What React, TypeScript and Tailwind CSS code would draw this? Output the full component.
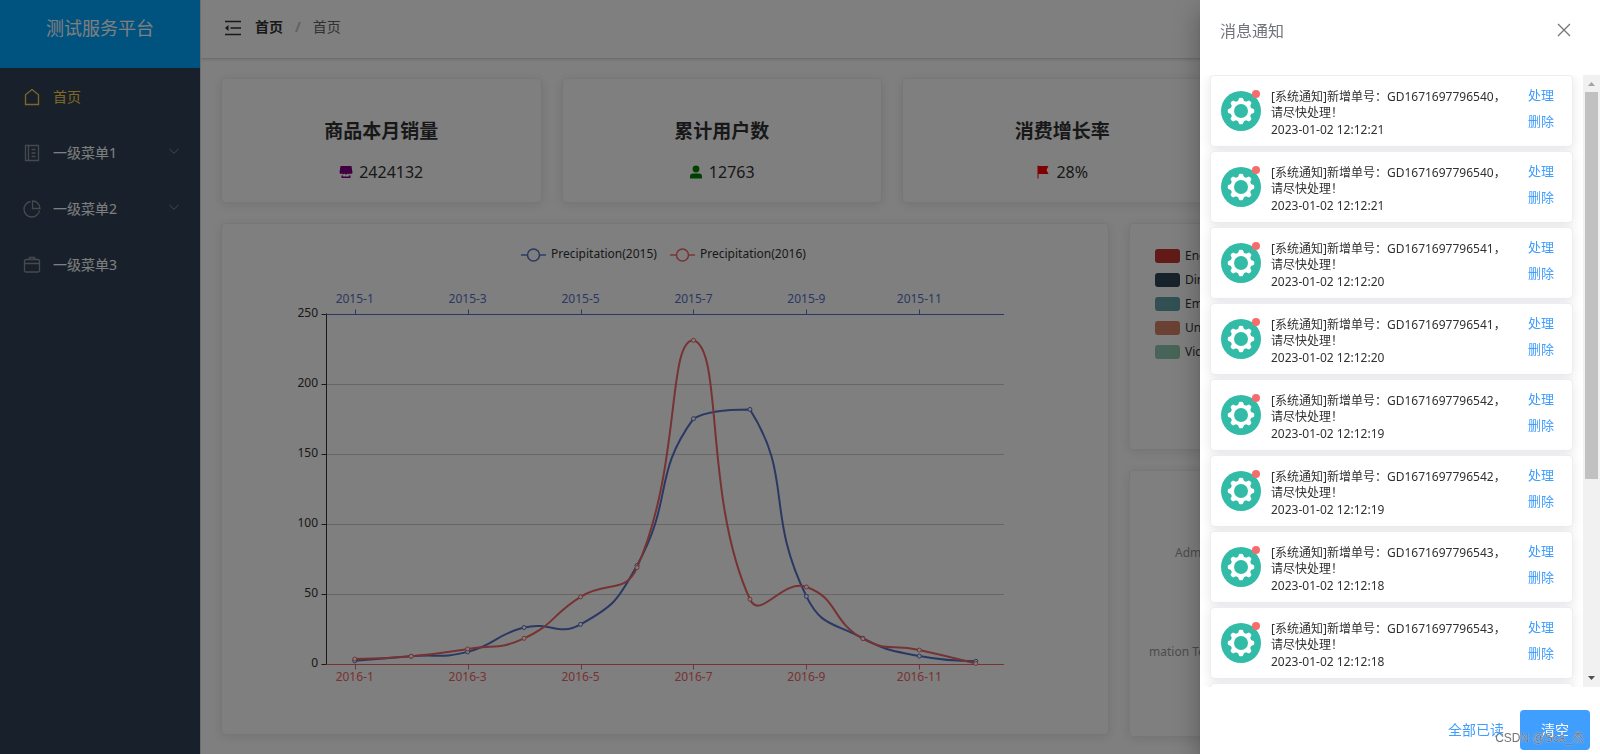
import React from 'react';

const PRECIPITATION_2015 = [2.6, 5.9, 9.0, 26.4, 28.7, 70.7, 175.6, 182.2, 48.7, 18.8, 6.0, 2.3];
const PRECIPITATION_2016 = [3.9, 5.9, 11.1, 18.7, 48.3, 69.2, 231.6, 46.6, 55.4, 18.4, 10.3, 0.7];

const PLOT = { left: 104.5, right: 782, top: 90.5, bottom: 440.5, max: 250 };
const BAND = (PLOT.right - PLOT.left) / 12;

type Point = [number, number];

function toPoints(values: number[]): Point[] {
  return values.map((v, i) => [
    PLOT.left + BAND * (i + 0.5),
    PLOT.bottom - (v / PLOT.max) * (PLOT.bottom - PLOT.top),
  ]);
}

// Bezier smoothing with control points clamped to the bounding box of the series.
function smoothPath(points: Point[], smooth = 0.5): string {
  const xs = points.map((p) => p[0]);
  const ys = points.map((p) => p[1]);
  const clamp = ([x, y]: Point): Point => [
    Math.max(Math.min(x, Math.max(...xs)), Math.min(...xs)),
    Math.max(Math.min(y, Math.max(...ys)), Math.min(...ys)),
  ];
  let d = `M${points[0][0]} ${points[0][1]}`;
  let cp0: Point = points[0];
  for (let i = 1; i < points.length; i++) {
    const p = points[i];
    const prev = points[i - 1];
    const next = points[i + 1];
    let cp1: Point = p;
    let nextCp: Point = p;
    if (next) {
      const v: Point = [next[0] - prev[0], next[1] - prev[1]];
      const lenPrev = Math.hypot(p[0] - prev[0], p[1] - prev[1]);
      const lenNext = Math.hypot(p[0] - next[0], p[1] - next[1]);
      const ratio = lenNext / (lenNext + lenPrev);
      cp1 = [p[0] - v[0] * smooth * (1 - ratio), p[1] - v[1] * smooth * (1 - ratio)];
      nextCp = [p[0] + v[0] * smooth * ratio, p[1] + v[1] * smooth * ratio];
    }
    const a = clamp(cp0);
    const b = clamp(cp1);
    d += `C${a[0]} ${a[1]} ${b[0]} ${b[1]} ${p[0]} ${p[1]}`;
    cp0 = nextCp;
  }
  return d;
}

function Series({ values, color }: { values: number[]; color: string }) {
  const points = toPoints(values);
  return (
    <g stroke={color}>
      <path d={smoothPath(points)} fill="none" strokeWidth="2" />
      {points.map(([x, y], i) => (
        <circle key={i} cx={x} cy={y} r="2" fill="#fff" strokeWidth="1" />
      ))}
    </g>
  );
}

function LegendMark({ x, color, label }: { x: number; color: string; label: string }) {
  return (
    <g>
      <path d={`M${x} 31h25`} stroke={color} strokeWidth="2" opacity="0.7" />
      <circle cx={x + 12.5} cy="31" r="6" fill="#fff" stroke={color} strokeWidth="1.5" />
      <text x={x + 30} y="34" fill="#333">
        {label}
      </text>
    </g>
  );
}

function PrecipitationChart() {
  const months = [1, 3, 5, 7, 9, 11];
  const ticks = [0, 50, 100, 150, 200, 250];
  const tickY = (t: number) => PLOT.bottom - Math.round((t / 250) * 350);
  return (
    <svg viewBox="0 0 886 510" className="block h-auto w-full text-[12px]" role="img" aria-label="Precipitation">
      <LegendMark x={299} color="#5470c6" label="Precipitation(2015)" />
      <LegendMark x={448} color="#ee6666" label="Precipitation(2016)" />
      {ticks.map((t) => (
        <g key={t}>
          {t > 0 && t < 250 && <path d={`M${PLOT.left} ${tickY(t)}H${PLOT.right}`} stroke="#ccc" />}
          <path d={`M${PLOT.left - 5} ${tickY(t)}h5`} stroke="#333" />
          <text x="96" y={tickY(t) + 2.5} textAnchor="end" fill="#333">
            {t}
          </text>
        </g>
      ))}
      <path d={`M${PLOT.left} ${PLOT.top - 1}V${PLOT.bottom}`} stroke="#333" />
      <path d={`M${PLOT.left} ${PLOT.top}H${PLOT.right}`} stroke="#5470c6" />
      <path d={`M${PLOT.left} ${PLOT.bottom}H${PLOT.right}`} stroke="#ee6666" />
      {months.map((m) => {
        const x = PLOT.left + BAND * (m - 0.5);
        const tx = Math.round(x) + 0.5;
        return (
          <g key={m} textAnchor="middle">
            <path d={`M${tx} ${PLOT.top}v-5`} stroke="#5470c6" />
            <path d={`M${tx} ${PLOT.bottom}v5`} stroke="#ee6666" />
            <text x={x} y="79" fill="#5470c6">{`2015-${m}`}</text>
            <text x={x} y="457" fill="#ee6666">{`2016-${m}`}</text>
          </g>
        );
      })}
      <Series values={PRECIPITATION_2015} color="#5470c6" />
      <Series values={PRECIPITATION_2016} color="#ee6666" />
    </svg>
  );
}

const menuIcons = {
  home: <path d="M2.5 16.5V6.8L9 1.5l6.5 5.3v9.7z" />,
  notebook: (
    <>
      <path d="M2.5 1.5h13v15h-13zM5.5 1.5v15" />
      <path d="M8.5 5.5h4M8.5 9h4M8.5 12.5h4" />
    </>
  ),
  pie: (
    <>
      <path d="M7.5 1.5a7.8 7.8 0 1 0 9 9" />
      <path d="M9.5 1v7.5H17A7.5 7.5 0 0 0 9.5 1z" />
    </>
  ),
  suitcase: (
    <>
      <rect x="1.5" y="3.5" width="15" height="12.5" rx="1.5" />
      <path d="M6 3.5l.5-2h5l.5 2M1.5 7.5h15" />
    </>
  ),
};

const menu: { icon: keyof typeof menuIcons; label: string; active?: boolean; expandable?: boolean }[] = [
  { icon: 'home', label: '首页', active: true },
  { icon: 'notebook', label: '一级菜单1', expandable: true },
  { icon: 'pie', label: '一级菜单2', expandable: true },
  { icon: 'suitcase', label: '一级菜单3' },
];

function Sidebar() {
  return (
    <aside className="w-[200px] shrink-0 bg-[#304156]">
      <h1 className="flex h-[68px] items-start justify-center bg-[#00a4ff] pt-4 text-lg leading-6 font-normal text-white">
        测试服务平台
      </h1>
      <nav>
        <ul className="pt-px">
          {menu.map((item) => (
            <li key={item.label}>
              <a href="#" className="flex h-14 items-center pr-5 pl-[23px] text-sm">
                <svg
                  viewBox="0 0 18 18"
                  className={item.active ? 'size-[18px] text-[#ffd04b]' : 'size-[18px] text-[#909399]'}
                  fill="none"
                  stroke="currentColor"
                  strokeWidth="1.3"
                  aria-hidden="true"
                >
                  {menuIcons[item.icon]}
                </svg>
                <span className={item.active ? 'ml-3 text-[#ffd04b]' : 'ml-3 text-white'}>{item.label}</span>
                {item.expandable && (
                  <svg viewBox="0 0 12 12" className="mb-1 ml-auto size-3 text-[#909399]" fill="none" stroke="currentColor" aria-hidden="true">
                    <path d="M1.5 4L6 8.3L10.5 4" />
                  </svg>
                )}
              </a>
            </li>
          ))}
        </ul>
      </nav>
    </aside>
  );
}

function TopBar() {
  return (
    <header className="flex h-[59px] items-start border-b border-[#d8dce5] pt-[17px] pl-[23px] shadow-[0_1px_3px_0_rgba(0,0,0,.12)]">
      <button type="button" aria-label="收起菜单" className="mt-0.5">
        <svg viewBox="0 0 18 18" className="size-[18px]" aria-hidden="true">
          <path d="M1 2.5h16M6.5 9H17M1 15.5h16" stroke="#303133" strokeWidth="1.5" fill="none" />
          <path d="M4.5 6v6L1 9z" fill="#303133" />
        </svg>
      </button>
      <nav className="ml-[13px] flex text-sm leading-5">
        <a href="#" className="font-bold text-[#303133]">
          首页
        </a>
        <span className="mx-3 font-bold text-[#c0c4cc]">/</span>
        <span className="text-[#606266]">首页</span>
      </nav>
    </header>
  );
}

const CARD = 'rounded border border-[#ebeef5] bg-white shadow-[0_2px_12px_0_rgba(0,0,0,.1)]';

const statIcons = {
  goods: (
    <>
      <path d="M1.5 1h11l1 6.5a1.5 1.5 0 0 1-2.5 1 1.5 1.5 0 0 1-2.6 0 1.5 1.5 0 0 1-2.8 0 1.5 1.5 0 0 1-2.6 0A1.5 1.5 0 0 1 .5 7.5z" />
      <path d="M2.5 10.5H4v1h6v-1h1.5V13h-9z" />
    </>
  ),
  user: (
    <>
      <circle cx="7" cy="4" r="3.4" />
      <path d="M1 13.5v-2a3 3 0 0 1 3-3h6a3 3 0 0 1 3 3v2z" />
    </>
  ),
  flag: <path d="M1.5 .5h1V1h10l-2 4 2 4h-10v4.5h-1z" />,
};

const stats: { icon: keyof typeof statIcons; title: string; value: string; color: string }[] = [
  { icon: 'goods', title: '商品本月销量', value: '2424132', color: 'text-[#800080]' },
  { icon: 'user', title: '累计用户数', value: '12763', color: 'text-[#008000]' },
  { icon: 'flag', title: '消费增长率', value: '28%', color: 'text-[#ff0000]' },
];

const sources = [
  { label: 'Engine', color: 'bg-[#c23531]' },
  { label: 'Direct', color: 'bg-[#2f4554]' },
  { label: 'Email', color: 'bg-[#61a0a8]' },
  { label: 'Union Ads', color: 'bg-[#d48265]' },
  { label: 'Video Ads', color: 'bg-[#91c7ae]' },
];

function Dashboard() {
  return (
    <main className="pt-[19px] pr-[37px] pl-5">
      <div className="grid grid-cols-4 gap-5">
        {stats.map((s) => (
          <section key={s.title} className={`${CARD} flex h-[125px] flex-col items-center pt-10`}>
            <h3 className="text-[19px] leading-6 font-bold text-[#303133]">{s.title}</h3>
            <p className="mt-[17px] flex items-center gap-1.5 text-base leading-6 text-[#303133]">
              <svg viewBox="0 0 14 14" className={`size-3.5 ${s.color}`} fill="currentColor" aria-hidden="true">
                {statIcons[s.icon]}
              </svg>
              {s.value}
            </p>
          </section>
        ))}
      </div>
      <div className="mt-5 grid grid-cols-12 items-start gap-5">
        <section className={`${CARD} col-span-8`}>
          <PrecipitationChart />
        </section>
        <div className="col-span-4 flex flex-col gap-5">
          <section className={`${CARD} h-[227px] px-[25px] pt-5`}>
            <ul className="text-[12px] leading-6 text-[#333]">
              {sources.map((s) => (
                <li key={s.label} className="flex items-center gap-[5px]">
                  <span className={`h-3.5 w-[25px] rounded-[3px] ${s.color}`} />
                  {s.label}
                </li>
              ))}
            </ul>
          </section>
          <section className={`${CARD} h-[267px] px-[19px] pt-[72px] text-[12px] leading-5 text-[#999]`}>
            <p className="pl-[26px]">Administration</p>
            <p className="mt-[79px]">mation Technology</p>
          </section>
        </div>
      </div>
    </main>
  );
}

const notices = [
  { id: 'GD1671697796540', time: '2023-01-02 12:12:21' },
  { id: 'GD1671697796540', time: '2023-01-02 12:12:21' },
  { id: 'GD1671697796541', time: '2023-01-02 12:12:20' },
  { id: 'GD1671697796541', time: '2023-01-02 12:12:20' },
  { id: 'GD1671697796542', time: '2023-01-02 12:12:19' },
  { id: 'GD1671697796542', time: '2023-01-02 12:12:19' },
  { id: 'GD1671697796543', time: '2023-01-02 12:12:18' },
  { id: 'GD1671697796543', time: '2023-01-02 12:12:18' },
  { id: 'GD1671697796544', time: '2023-01-02 12:12:17' },
];

function GearAvatar() {
  return (
    <svg viewBox="-20 -20 40 40" className="size-10" aria-hidden="true">
      <circle r="20" fill="#32bba7" />
      <g fill="#fff">
        {[0, 45, 90, 135, 180, 225, 270, 315].map((a) => (
          <path key={a} d="M-3.4 -9L-1.8 -13Q0 -13.6 1.8 -13L3.4 -9z" transform={`rotate(${a})`} />
        ))}
        <circle r="10.5" />
      </g>
      <circle r="7" fill="#32bba7" />
    </svg>
  );
}

function NoticeCard({ id, time }: { id: string; time: string }) {
  return (
    <li className={`${CARD} flex h-[72px] shrink-0 px-2.5`}>
      <div className="relative mt-[15px] size-10 shrink-0">
        <GearAvatar />
        <span className="absolute -top-px right-px size-2 rounded-full bg-[#f56c6c]" />
      </div>
      <div className="mt-[13px] ml-2.5 min-w-0 flex-1 text-[12px] leading-4 text-[#303133]">
        <p>
          [系统通知]新增单号：{id}，
          <br />
          请尽快处理！
        </p>
        <p className="leading-[18px]">{time}</p>
      </div>
      <div className="mt-[9px] mr-2 flex shrink-0 flex-col items-end gap-1.5 text-[13px] leading-5 text-[#409eff]">
        <button type="button">处理</button>
        <button type="button">删除</button>
      </div>
    </li>
  );
}

function ScrollTrack() {
  return (
    <div className="flex w-[17px] shrink-0 flex-col items-center bg-[#f1f1f1]" aria-hidden="true">
      <svg viewBox="0 0 17 17" className="size-[17px] shrink-0">
        <path d="M5 11h7L8.5 7z" fill="#a3a3a3" />
      </svg>
      <div className="flex w-[13px] flex-1">
        <span className="h-[67%] w-full bg-[#c1c1c1]" />
      </div>
      <svg viewBox="0 0 17 17" className="size-[17px] shrink-0">
        <path d="M5 6h7L8.5 10z" fill="#505050" />
      </svg>
    </div>
  );
}

function NotificationDrawer() {
  return (
    <aside
      role="dialog"
      aria-label="消息通知"
      className="fixed inset-y-0 right-0 flex w-1/4 min-w-[380px] flex-col bg-white shadow-[0_8px_10px_-5px_rgba(0,0,0,.2),0_16px_24px_2px_rgba(0,0,0,.14),0_6px_30px_5px_rgba(0,0,0,.12)]"
    >
      <header className="flex h-[75px] shrink-0 items-start justify-between pt-[19px] pr-[29px] pl-5">
        <h2 className="text-base leading-6 font-normal text-[#72767b]">消息通知</h2>
        <button type="button" aria-label="关闭" className="mt-1">
          <svg viewBox="0 0 14 14" className="size-3.5" aria-hidden="true">
            <path d="M1 1l12 12M13 1L1 13" stroke="#72767b" strokeWidth="1.3" fill="none" />
          </svg>
        </button>
      </header>
      <div className="flex min-h-0 flex-1">
        <ul className="flex min-w-0 flex-1 flex-col gap-1 overflow-hidden px-2.5">
          {notices.map((n, i) => (
            <NoticeCard key={i} {...n} />
          ))}
        </ul>
        <ScrollTrack />
      </div>
      <footer className="flex shrink-0 items-center justify-end gap-4 pt-[23px] pr-2.5 pb-1 text-sm">
        <button type="button" className="h-10 text-[#409eff]">
          全部已读
        </button>
        <button type="button" className="h-10 rounded bg-[#409eff] px-[21px] text-white">
          清空
        </button>
      </footer>
      <span className="pointer-events-none absolute right-4 bottom-1.5 font-['Liberation_Sans','Noto_Sans_CJK_SC',sans-serif] text-[12px] leading-5 text-[#666]/90 [text-shadow:0_0_1px_#fff]">
        CSDN @Sca_杰
      </span>
    </aside>
  );
}

export default function App() {
  return (
    <div className="flex h-screen overflow-hidden bg-white font-['Noto_Sans','Noto_Sans_CJK_SC',sans-serif]">
      <Sidebar />
      <div className="min-w-0 flex-1 overflow-hidden border-l border-[#dcdfe6]">
        <TopBar />
        <Dashboard />
      </div>
      <div className="fixed inset-0 bg-black/50" />
      <NotificationDrawer />
    </div>
  );
}
